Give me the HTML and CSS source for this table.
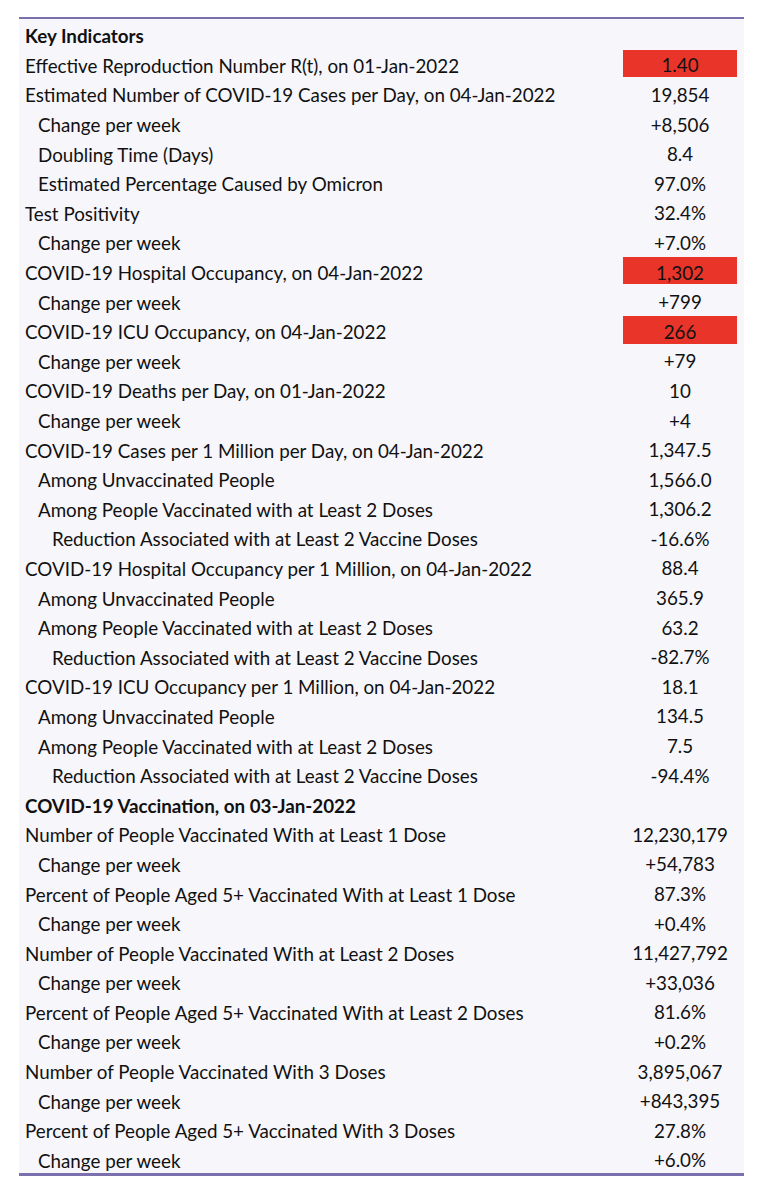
FILE: index.html
```html
<!DOCTYPE html>
<html lang="en">
<head>
<meta charset="utf-8">
<title>Key Indicators</title>
<link rel="stylesheet" href="styles.css">
</head>
<body>
<div class="sheet">
  <div class="row head"><span class="label">Key Indicators</span><span class="val"></span></div>
  <div class="row"><span class="label">Effective Reproduction Number R(t), on 01-Jan-2022</span><span class="val alert">1.40</span></div>
  <div class="row"><span class="label">Estimated Number of COVID-19 Cases per Day, on 04-Jan-2022</span><span class="val">19,854</span></div>
  <div class="row l1"><span class="label">Change per week</span><span class="val">+8,506</span></div>
  <div class="row l1"><span class="label">Doubling Time (Days)</span><span class="val">8.4</span></div>
  <div class="row l1"><span class="label">Estimated Percentage Caused by Omicron</span><span class="val">97.0%</span></div>
  <div class="row"><span class="label">Test Positivity</span><span class="val">32.4%</span></div>
  <div class="row l1"><span class="label">Change per week</span><span class="val">+7.0%</span></div>
  <div class="row"><span class="label">COVID-19 Hospital Occupancy, on 04-Jan-2022</span><span class="val alert">1,302</span></div>
  <div class="row l1"><span class="label">Change per week</span><span class="val">+799</span></div>
  <div class="row"><span class="label">COVID-19 ICU Occupancy, on 04-Jan-2022</span><span class="val alert">266</span></div>
  <div class="row l1"><span class="label">Change per week</span><span class="val">+79</span></div>
  <div class="row"><span class="label">COVID-19 Deaths per Day, on 01-Jan-2022</span><span class="val">10</span></div>
  <div class="row l1"><span class="label">Change per week</span><span class="val">+4</span></div>
  <div class="row"><span class="label">COVID-19 Cases per 1 Million per Day, on 04-Jan-2022</span><span class="val">1,347.5</span></div>
  <div class="row l1"><span class="label">Among Unvaccinated People</span><span class="val">1,566.0</span></div>
  <div class="row l1"><span class="label">Among People Vaccinated with at Least 2 Doses</span><span class="val">1,306.2</span></div>
  <div class="row l2"><span class="label">Reduction Associated with at Least 2 Vaccine Doses</span><span class="val">-16.6%</span></div>
  <div class="row"><span class="label">COVID-19 Hospital Occupancy per 1 Million, on 04-Jan-2022</span><span class="val">88.4</span></div>
  <div class="row l1"><span class="label">Among Unvaccinated People</span><span class="val">365.9</span></div>
  <div class="row l1"><span class="label">Among People Vaccinated with at Least 2 Doses</span><span class="val">63.2</span></div>
  <div class="row l2"><span class="label">Reduction Associated with at Least 2 Vaccine Doses</span><span class="val">-82.7%</span></div>
  <div class="row"><span class="label">COVID-19 ICU Occupancy per 1 Million, on 04-Jan-2022</span><span class="val">18.1</span></div>
  <div class="row l1"><span class="label">Among Unvaccinated People</span><span class="val">134.5</span></div>
  <div class="row l1"><span class="label">Among People Vaccinated with at Least 2 Doses</span><span class="val">7.5</span></div>
  <div class="row l2"><span class="label">Reduction Associated with at Least 2 Vaccine Doses</span><span class="val">-94.4%</span></div>
  <div class="row head"><span class="label">COVID-19 Vaccination, on 03-Jan-2022</span><span class="val"></span></div>
  <div class="row"><span class="label">Number of People Vaccinated With at Least 1 Dose</span><span class="val">12,230,179</span></div>
  <div class="row l1"><span class="label">Change per week</span><span class="val">+54,783</span></div>
  <div class="row"><span class="label">Percent of People Aged 5+ Vaccinated With at Least 1 Dose</span><span class="val">87.3%</span></div>
  <div class="row l1"><span class="label">Change per week</span><span class="val">+0.4%</span></div>
  <div class="row"><span class="label">Number of People Vaccinated With at Least 2 Doses</span><span class="val">11,427,792</span></div>
  <div class="row l1"><span class="label">Change per week</span><span class="val">+33,036</span></div>
  <div class="row"><span class="label">Percent of People Aged 5+ Vaccinated With at Least 2 Doses</span><span class="val">81.6%</span></div>
  <div class="row l1"><span class="label">Change per week</span><span class="val">+0.2%</span></div>
  <div class="row"><span class="label">Number of People Vaccinated With 3 Doses</span><span class="val">3,895,067</span></div>
  <div class="row l1"><span class="label">Change per week</span><span class="val">+843,395</span></div>
  <div class="row"><span class="label">Percent of People Aged 5+ Vaccinated With 3 Doses</span><span class="val">27.8%</span></div>
  <div class="row l1"><span class="label">Change per week</span><span class="val">+6.0%</span></div>
</div>
</body>
</html>
```
FILE: styles.css
```css
html, body {
  margin: 0;
  padding: 0;
  background: #ffffff;
}
body {
  padding: 17px 24px 0 19px;
  font-family: Lato, "Open Sans", sans-serif;
  font-size: 18.8px;
  color: #111111;
}
.sheet {
  width: 725px;
  background: #f7f6fb;
  border-top: 2px solid #7b6fae;
  border-bottom: 3px solid #7b6fae;
}
.row {
  display: grid;
  grid-template-columns: 1fr 114px;
  padding-right: 7px;
  height: 29.6px;
  align-items: center;
}
.label {
  padding-left: 6px;
  padding-top: 4px;
  white-space: nowrap;
}
.l1 .label { padding-left: 19px; }
.l2 .label { padding-left: 33px; }
.head .label { font-weight: bold; }
.val {
  align-self: stretch;
  display: flex;
  align-items: center;
  justify-content: center;
  margin: 1px 0;
  padding-top: 3px;
}
.alert {
  background: #e9342a;
}
```
